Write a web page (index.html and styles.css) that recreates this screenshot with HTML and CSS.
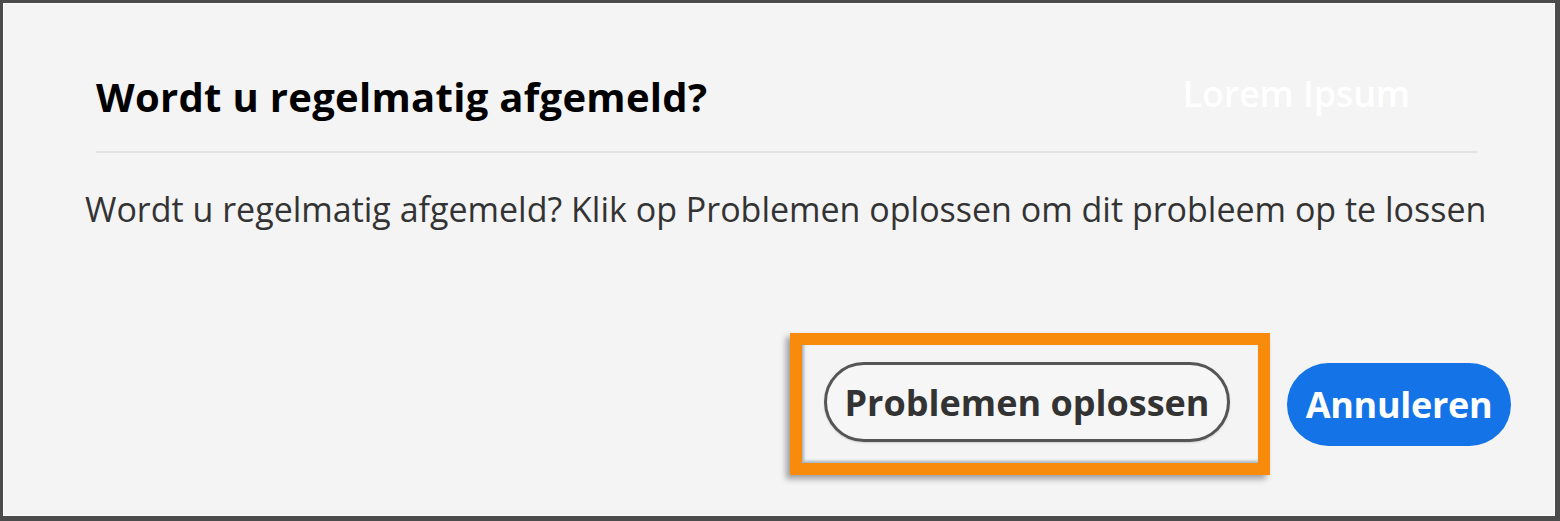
FILE: index.html
```html
<!DOCTYPE html>
<html lang="nl">
<head>
<meta charset="utf-8">
<title>Wordt u regelmatig afgemeld?</title>
<link rel="stylesheet" href="styles.css">
</head>
<body>
<div class="dialog">
  <div class="header">
    <h1 class="title">Wordt u regelmatig afgemeld?</h1>
    <span class="ghost">Lorem Ipsum</span>
  </div>
  <p class="body-text">Wordt u regelmatig afgemeld? Klik op Problemen oplossen om dit probleem op te lossen</p>
  <div class="actions">
    <div class="highlight">
      <button class="btn btn-outline">Problemen oplossen</button>
    </div>
    <button class="btn btn-primary">Annuleren</button>
  </div>
</div>
</body>
</html>
```
FILE: styles.css
```css
html, body {
  margin: 0;
  padding: 0;
  background: #4b4b4b;
}
.dialog {
  box-sizing: border-box;
  width: 1560px;
  height: 521px;
  background: #f4f4f4;
  border-style: solid;
  border-color: #4b4b4b;
  border-width: 3px 5px 5px 3px;
  box-shadow: inset 0 0 0 1px #fbfbfb;
  font-family: "Open Sans", "Liberation Sans", sans-serif;
  display: flex;
  flex-direction: column;
}
.header {
  display: flex;
  align-items: baseline;
  margin: 0 78px 0 93px;
  padding-top: 72px;
  padding-bottom: 32px;
  border-bottom: 2px solid #e2e2e2;
}
.title {
  margin: 0;
  font-size: 40px;
  font-weight: 700;
  letter-spacing: 0.3px;
  color: #000;
  line-height: 1.1;
}
.ghost {
  align-self: flex-start;
  margin-top: 1px;
  margin-left: auto;
  margin-right: 67px;
  font-size: 36px;
  line-height: 1;
  font-weight: 600;
  letter-spacing: -0.2px;
  color: #ffffff;
}
.body-text {
  margin: 36px 0 0 82px;
  font-size: 34px;
  color: #333;
  line-height: 1.2;
}
.actions {
  display: flex;
  justify-content: flex-end;
  align-items: center;
  gap: 17px;
  margin-top: auto;
  margin-bottom: 41px;
  padding-right: 44px;
}
.highlight {
  box-sizing: border-box;
  width: 480px;
  height: 142px;
  border: 12px solid #f88b0c;
  padding: 17px 0 0 22px;
  box-shadow: -4px 4px 6px rgba(0,0,0,0.35), inset 2px -2px 3px rgba(70,100,130,0.45);
}
.btn {
  font-family: "Open Sans", "Liberation Sans", sans-serif;
  font-weight: 700;
  font-size: 36px;
  border-radius: 42px;
  cursor: pointer;
}
.btn-outline {
  box-sizing: border-box;
  width: 406px;
  height: 80px;
  background: #f6f6f6;
  border: 3px solid #555;
  color: #333;
  box-shadow: 0 1px 2px rgba(0,0,0,0.15);
}
.btn-primary {
  box-sizing: border-box;
  width: 224px;
  height: 83px;
  background: #1473e6;
  border: none;
  color: #fff;
  letter-spacing: -0.3px;
}
```
